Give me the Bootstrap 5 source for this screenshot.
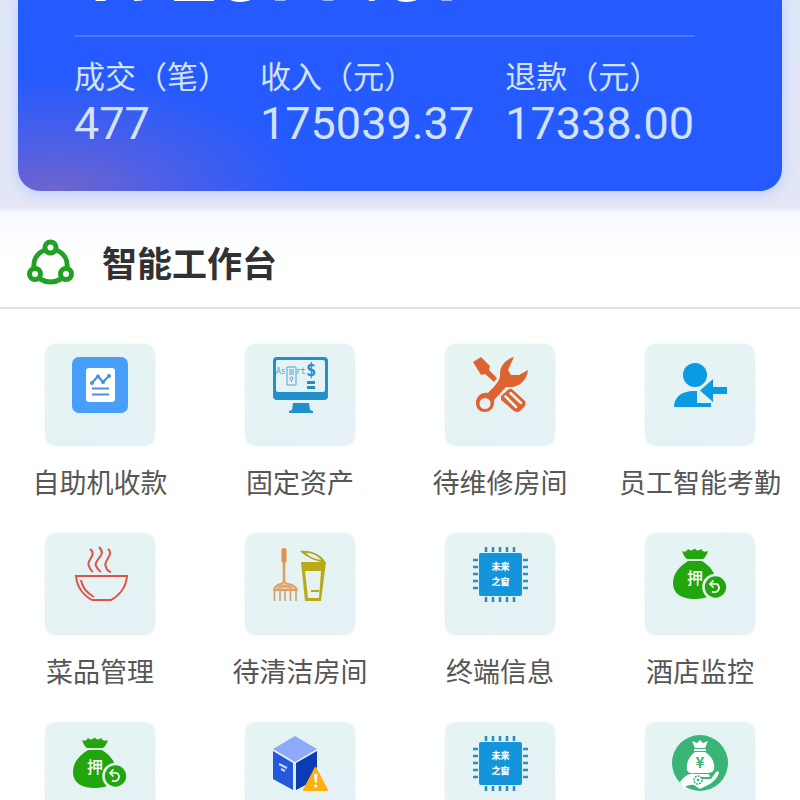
<!DOCTYPE html>
<html lang="zh-CN">
<head>
<meta charset="utf-8">
<meta name="viewport" content="width=device-width, initial-scale=1">
<title>智能工作台</title>
<link href="https://cdn.jsdelivr.net/npm/bootstrap@5.3.0/dist/css/bootstrap.min.css" rel="stylesheet">
<style>
body { font-family: "Noto Sans CJK SC", sans-serif; background: #fff; }
.hero { display: flow-root; padding: 0 18px 21px; background: linear-gradient(#dfe6f8 0, #e2e6f6 190px, #e5e5f5 206px, #f1f5fe 212px); }
.summary { display: flow-root; padding: 0 56px 41px; border-radius: 0 0 22px 22px; color: #d3e3ff;
  background: radial-gradient(ellipse 250px 115px at 40px 100%, rgba(116,101,202,.95) 0, rgba(100,98,216,.65) 40%, rgba(37,91,254,0) 100%), #255bfe;
  box-shadow: 0 2px 14px #b9cdfb; }
.amount, .stat-value { font-family: Roboto, sans-serif; }
.amount { margin-top: -71px; font-size: 84px; line-height: 88px; font-weight: 500; color: #fff; }
.divider { height: 2px; margin: 18px 31px 15px 0; background: #4a78ff; }
.stats { gap: 31px; }
.stat-name { font-size: 31px; line-height: 46px; }
.stat-value { font-size: 45px; line-height: 52px; }
.bench-head { gap: 28px; padding: 24px 26px 19px; background: linear-gradient(#f8fbff, #fff 50px); border-bottom: 2px solid #dfe0e1; }
.bench-head h1 { font-size: 35px; line-height: 52px; color: #303133; }
.bench { padding-top: 35px; row-gap: 31px; }
.app { color: #565656; gap: 16px; }
.tile { width: 110px; height: 102px; padding-top: 13px; border-radius: 11px; background: linear-gradient(150deg, #e5f4f2, #e5f1f6); box-shadow: 0 0 3px #e8f5f5; }
.app-name { font-size: 27px; line-height: 40px; }
svg { overflow: visible; }
svg text { font-family: "Noto Sans CJK SC", sans-serif; }
svg .mono { font-family: "DejaVu Sans Mono", monospace; }
</style>
</head>
<body>
<svg class="d-none" aria-hidden="true">
  <symbol id="chip" viewBox="0 0 56 56">
    <path d="M14 1v5M21 1v5M28 1v5M35 1v5M42 1v5M14 51v5M21 51v5M28 51v5M35 51v5M42 51v5M1 14h5M1 21h5M1 28h5M1 35h5M1 42h5M51 14h5M51 21h5M51 28h5M51 35h5M51 42h5" stroke="#258fc7" stroke-width="2.6" fill="none"/>
    <rect x="7" y="7" width="43" height="43" rx="2" fill="#1494da"/>
    <text x="28.500" y="24" font-size="9" font-weight="900" fill="#fff" text-anchor="middle">未来</text>
    <text x="28.500" y="39" font-size="9" font-weight="900" fill="#fff" text-anchor="middle">之窗</text>
  </symbol>
  <symbol id="bag" viewBox="0 0 56 56">
    <path d="M10 5Q14 7 16 3Q19 6 22.500 2.500Q26 6 29 3Q31 7 36 5Q34 11 31 13H15Q12 11 10 5Z" fill="#21a60e"/>
    <path d="M16 15H30C38 20 44 27 44 37C44 49 35 53 22 53C10 53 1 48 1 37C1 27 8 20 16 15Z" fill="#21a60e"/>
    <text x="23" y="38" font-size="16" font-weight="500" fill="#fff" text-anchor="middle">押</text>
    <circle cx="43.500" cy="41" r="12" fill="#21a60e" stroke="#e5f3f4" stroke-width="2.600"/>
    <path d="M38.500 38H45A4.500 4.500 0 1 1 40 45.500M41.500 34.500L38 38L41.500 41.500" fill="none" stroke="#fff" stroke-width="1.700"/>
  </symbol>
</svg>
<div class="vh-100 overflow-hidden">
  <header class="hero">
    <div class="summary">
      <div class="amount">192377.37</div>
      <div class="divider"></div>
      <div class="stats d-flex text-nowrap">
        <div><div class="stat-name">成交（笔）</div><div class="stat-value">477</div></div>
        <div><div class="stat-name">收入（元）</div><div class="stat-value">175039.37</div></div>
        <div><div class="stat-name">退款（元）</div><div class="stat-value">17338.00</div></div>
      </div>
    </div>
  </header>
  <main>
    <div class="bench-head d-flex align-items-center">
      <svg width="48" height="48" viewBox="0 0 48 48" fill="none" stroke="#21a121" stroke-width="5" aria-hidden="true">
        <path d="M19 12C11 15 7 22 8 30M30 12C38 15 42 22 41 30M14 41C21 45 28 45 35 41"/>
        <circle cx="24.500" cy="9.500" r="5.500"/><circle cx="9" cy="36" r="5.500"/><circle cx="40" cy="36" r="5.500"/>
      </svg>
      <h1 class="fw-bold mb-0">智能工作台</h1>
    </div>
    <nav class="bench row row-cols-4 gx-0" aria-label="应用">
      <a href="#" class="app col d-flex flex-column align-items-center text-nowrap text-decoration-none">
        <span class="tile"><svg class="d-block mx-auto" width="56" height="56" viewBox="0 0 56 56">
          <rect y="0" width="56" height="56" rx="7" fill="#489ff9"/><rect x="14" y="11" width="29" height="34" rx="3" fill="#fff"/>
          <path d="M20 26L26 19L31 25L37 19M20 31.500H37M20 37.500H37" fill="none" stroke="#4a91dc" stroke-width="2.200"/>
          <g fill="#4a91dc"><circle cx="20" cy="26" r="2"/><circle cx="26" cy="19.500" r="2"/><circle cx="31" cy="25" r="2"/><circle cx="37" cy="19" r="2"/></g>
        </svg></span><span class="app-name">自助机收款</span>
      </a>
      <a href="#" class="app col d-flex flex-column align-items-center text-nowrap text-decoration-none">
        <span class="tile"><svg class="d-block mx-auto" width="56" height="56" viewBox="0 0 56 56">
          <path fill-rule="evenodd" fill="#218fca" d="M5 0H52Q56 0 56 4V39Q56 43 52 43H5Q1 43 1 39V4Q1 0 5 0ZM5 3Q4 3 4 5V33Q4 35 6 35H51Q53 35 53 33V5Q53 3 51 3ZM21 46H37L38 53L41 54V56H17V54L20 53Z"/>
          <g fill="#4b9cca"><text class="mono" x="4" y="17" font-size="8">As</text><text class="mono" x="24" y="17" font-size="8">rt</text></g>
          <path d="M15 10H24V28H15ZM17 13H22M17 15H22M17 17H22M19.500 25V23" fill="none" stroke="#5b9edb" stroke-width="1"/><circle cx="19.500" cy="21.500" r="1.500" fill="none" stroke="#5b9edb"/>
          <text class="mono" x="39" y="19" font-size="17" font-weight="bold" fill="#218fca" text-anchor="middle">$</text>
          <path d="M35 25.500H43M35 30.500H43" stroke="#218fca" stroke-width="3"/>
        </svg></span><span class="app-name">固定资产</span>
      </a>
      <a href="#" class="app col d-flex flex-column align-items-center text-nowrap text-decoration-none">
        <span class="tile"><svg class="d-block mx-auto" width="56" height="56" viewBox="0 0 56 56">
          <g fill="#de6330"><path d="M1 5L9 0L18 9L17 13L25 21L22 25L13 17L9 18Z"/>
          <path fill-rule="evenodd" d="M42 0C34 2 28 9 28 16C29 22 25 27 16 36C9 35 4 40 4 46C4 52 8 55 13 55C19 55 23 50 22 43L34 30C44 32 55 25 56 13L47 18L39 18L36 13ZM13 41A5.500 5.500 0 1 1 13 52A5.500 5.500 0 1 1 13 41Z"/>
          <path d="M29 39L37 32Q39 31 41 33L53 44Q54 46 53 49L48 54Q45 56 42 54L29 43Z"/></g>
          <path d="M33.500 39.500L44 50M38.500 36L49 46" stroke="#e7f3f4" stroke-width="2.500" stroke-linecap="round"/>
        </svg></span><span class="app-name">待维修房间</span>
      </a>
      <a href="#" class="app col d-flex flex-column align-items-center text-nowrap text-decoration-none">
        <span class="tile"><svg class="d-block mx-auto" width="56" height="56" viewBox="0 0 56 56" fill="#0b9be2">
          <circle cx="23" cy="18" r="12"/><path d="M2 50C2 40 10 33 25 34V46H39V50Z"/><path d="M28 33.500L41 22V30H55V37H41V45Z"/>
        </svg></span><span class="app-name">员工智能考勤</span>
      </a>
      <a href="#" class="app col d-flex flex-column align-items-center text-nowrap text-decoration-none">
        <span class="tile"><svg class="d-block mx-auto" width="56" height="56" viewBox="0 0 56 56" fill="none" stroke="#df5149" stroke-width="2">
          <path d="M4 30H55C54 41 48 49 39 54H20C11 49 5 41 4 30ZM9 34C10 41 15 47 22 51"/>
          <path d="M18 3C26 9 13 15 17 20Q18 24 21 26M27 1C36 9 21 14 24 20Q26 24 29 26M36 3C43 9 30 15 34 21Q35 25 39 26"/>
        </svg></span><span class="app-name">菜品管理</span>
      </a>
      <a href="#" class="app col d-flex flex-column align-items-center text-nowrap text-decoration-none">
        <span class="tile"><svg class="d-block mx-auto" width="56" height="56" viewBox="0 0 56 56">
          <rect x="9.500" y="2" width="5" height="15" rx="2" fill="#e2924f"/>
          <path d="M12 15V37" stroke="#dd9e63" stroke-width="2.600"/>
          <path d="M2 44Q3 39 9 38L12 36L16 38Q23 39 25 44ZM6 42Q13 38 20 42" fill="#eec59e" stroke="#dd9e63" stroke-width="1.800"/>
          <path d="M2.500 45V55M8 45V55M13 45V55M18.500 45V55M24 45V55" stroke="#c99f78" stroke-width="1.600"/>
          <path d="M28 5C39 4 49 8 54 17C44 15 35 12 28 5ZM34 7C38 11 43 13 49 14C45 9 40 7 34 7Z" fill="#b4a820" fill-rule="evenodd"/>
          <path d="M29 16H54L49 55H33ZM33 25L36 52H47L49 25Z" fill="#b9aa17" fill-rule="evenodd"/><path d="M39 45H47" stroke="#b9aa17" stroke-width="2"/>
        </svg></span><span class="app-name">待清洁房间</span>
      </a>
      <a href="#" class="app col d-flex flex-column align-items-center text-nowrap text-decoration-none">
        <span class="tile"><svg class="d-block mx-auto" width="56" height="56"><use href="#chip"/></svg></span><span class="app-name">终端信息</span>
      </a>
      <a href="#" class="app col d-flex flex-column align-items-center text-nowrap text-decoration-none">
        <span class="tile"><svg class="d-block mx-auto" width="56" height="56"><use href="#bag"/></svg></span><span class="app-name">酒店监控</span>
      </a>
      <a href="#" class="app col d-flex flex-column align-items-center" aria-label="押金">
        <span class="tile"><svg class="d-block mx-auto" width="56" height="56"><use href="#bag"/></svg></span>
      </a>
      <a href="#" class="app col d-flex flex-column align-items-center" aria-label="库存预警">
        <span class="tile"><svg class="d-block mx-auto" width="56" height="56" viewBox="0 0 56 56">
          <path d="M23 1L45 14L23 27L1 14Z" fill="#8ea8fa"/><path d="M1 16L21 28V55L1 44Z" fill="#2558dc"/><path d="M24 28L45 16V44L24 55Z" fill="#0c3bb6"/>
          <path d="M22.500 28V55" stroke="#dce8fc" stroke-width="2"/><path d="M7 29L15 33M9 34L13 36" stroke="#c5d8ff" stroke-width="2"/>
          <path d="M43.500 33L55 55H32Z" fill="#fbb00f" stroke="#fbb00f" stroke-width="2" stroke-linejoin="round"/><path d="M42 39H45.500L44.500 48H43Z" fill="#fff"/><circle cx="43.700" cy="51" r="1.500" fill="#fff"/>
        </svg></span>
      </a>
      <a href="#" class="app col d-flex flex-column align-items-center" aria-label="终端">
        <span class="tile"><svg class="d-block mx-auto" width="56" height="56"><use href="#chip"/></svg></span>
      </a>
      <a href="#" class="app col d-flex flex-column align-items-center" aria-label="资金管理">
        <span class="tile"><svg class="d-block mx-auto" width="56" height="56" viewBox="0 0 56 56">
          <circle cx="28" cy="28" r="28" fill="#3bb477"/>
          <g fill="#fff"><path d="M20 6L25 8L28 5L31 8L36 6L33 13H23ZM22 14H34V16H22Z"/><path d="M23 17H33C40 21 43 28 42 34Q41 38 36 38H20Q15 38 15 34C14 28 17 21 23 17Z"/>
          <path d="M8 47C13 40 18 38 23 39H36Q39 40 37 43H28V44H39L44 37Q47 35 47 38Q44 46 36 50L28 54L22 50Q16 49 12 53Z"/></g>
          <text x="28" y="33" font-size="15" font-weight="bold" fill="#3bb477" text-anchor="middle">¥</text>
          <circle cx="26" cy="45" r="4" fill="#fff" stroke="#3bb477" stroke-width="1.500" stroke-dasharray="2 1"/><circle cx="26" cy="45" r="1.300" fill="#3bb477"/>
          <path d="M28 42.500H37" stroke="#3bb477"/>
        </svg></span>
      </a>
    </nav>
  </main>
</div>
<script src="https://cdn.jsdelivr.net/npm/bootstrap@5.3.0/dist/js/bootstrap.bundle.min.js"></script>
</body>
</html>
